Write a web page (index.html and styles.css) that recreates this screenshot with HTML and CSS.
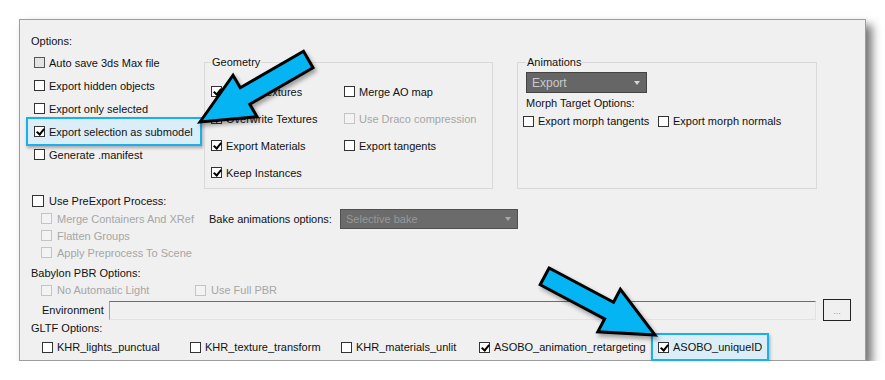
FILE: index.html
```html
<!DOCTYPE html>
<html lang="en">

<head>
    <meta charset="UTF-8">
    <title>Babylon Exporter Options</title>
    <link rel="stylesheet" href="styles.css">
</head>

<body>
    <div class="window">

        <!-- Top part: general options, geometry, animations -->
        <div class="top">
            <div class="options">
                <div class="label">Options:</div>
                <div class="opt-row"><span class="cb hover"></span>Auto save 3ds Max file</div>
                <div class="opt-row"><span class="cb"></span>Export hidden objects</div>
                <div class="opt-row"><span class="cb"></span>Export only selected</div>
                <div class="opt-row">
                    <span class="highlight"><span class="cb checked"></span>Export selection as submodel</span>
                </div>
                <div class="opt-row"><span class="cb"></span>Generate .manifest</div>
            </div>

            <fieldset class="group geometry">
                <legend>Geometry</legend>
                <div class="geo-grid">
                    <div class="item"><span class="cb checked"></span>Export Textures</div>
                    <div class="item"><span class="cb"></span>Merge AO map</div>
                    <div class="item"><span class="cb checked"></span>Overwrite Textures</div>
                    <div class="item disabled"><span class="cb"></span>Use Draco compression</div>
                    <div class="item"><span class="cb checked"></span>Export Materials</div>
                    <div class="item"><span class="cb"></span>Export tangents</div>
                    <div class="item"><span class="cb checked"></span>Keep Instances</div>
                </div>
            </fieldset>

            <fieldset class="group animations">
                <legend>Animations</legend>
                <div class="combo anim-combo"><span>Export</span><span class="caret"></span></div>
                <div class="label morph-label">Morph Target Options:</div>
                <div class="morph-row">
                    <div class="item"><span class="cb"></span>Export morph tangents</div>
                    <div class="item"><span class="cb"></span>Export morph normals</div>
                </div>
            </fieldset>
        </div>

        <!-- PreExport process -->
        <div class="pre">
            <div class="pre-col">
                <div class="pre-main"><span class="cb big"></span>Use PreExport Process:</div>
                <div class="sub-row disabled"><span class="cb"></span>Merge Containers And XRef</div>
                <div class="sub-row disabled"><span class="cb"></span>Flatten Groups</div>
                <div class="sub-row disabled"><span class="cb"></span>Apply Preprocess To Scene</div>
            </div>
            <div class="bake">
                <span class="bake-label">Bake animations options:</span>
                <div class="combo bake-combo"><span>Selective bake</span><span class="caret"></span></div>
            </div>
        </div>

        <!-- PBR -->
        <div class="label pbr-label">Babylon PBR Options:</div>
        <div class="pbr-row">
            <div class="item disabled"><span class="cb"></span>No Automatic Light</div>
            <div class="item disabled"><span class="cb"></span>Use Full PBR</div>
        </div>
        <div class="env-row">
            <span class="env-label">Environment</span>
            <div class="env-input"></div>
            <div class="browse-btn">...</div>
        </div>

        <!-- GLTF -->
        <div class="label">GLTF Options:</div>
        <div class="gltf-row">
            <div class="item"><span class="cb"></span>KHR_lights_punctual</div>
            <div class="item"><span class="cb"></span>KHR_texture_transform</div>
            <div class="item"><span class="cb"></span>KHR_materials_unlit</div>
            <div class="item"><span class="cb checked"></span>ASOBO_animation_retargeting</div>
            <div class="item"><span class="highlight"><span class="cb checked"></span>ASOBO_uniqueID</span></div>
        </div>
    </div>

    <!-- Callout arrows drawn over the dialog -->
    <svg class="arrows" width="885" height="380" viewBox="0 0 885 380">
        <defs>
            <polygon id="arrow" points="0,0 52,-24 52,-9.5 125,-9.5 125,9.5 52,9.5 52,24" />
        </defs>
        <use href="#arrow" transform="translate(200 122) rotate(-30)" />
        <use href="#arrow" transform="translate(655 335) rotate(208)" />
    </svg>
</body>

</html>
```

FILE: styles.css
```css
* {
    margin: 0;
    padding: 0;
    box-sizing: border-box;
}

body {
    font-family: "Liberation Sans", Arial, sans-serif;
    font-size: 11px;
    color: #111;
    background-color: #fff;
}

.window {
    width: 847px;
    height: 342px;
    margin: 19px 0 0 19px;
    padding: 14px 0 0 11px;
    background-color: #f0f0f0;
    border: 1px solid #9d9d9d;
    box-shadow: 6px 6px 9px rgba(0, 0, 0, 0.55);
}

.label {
    height: 14px;
    line-height: 14px;
}

/* checkboxes */
.cb {
    position: relative;
    flex: none;
    width: 11px;
    height: 11px;
    margin-right: 4px;
    border: 1px solid #333;
    background-color: #fff;
}

.cb.big {
    width: 12px;
    height: 12px;
    margin-right: 5px;
}

.cb.hover {
    background-color: #e3e3e3;
    border-color: #555;
}

.cb.checked::after {
    content: "";
    position: absolute;
    left: 3px;
    top: 0px;
    width: 3px;
    height: 6px;
    border-right: 2px solid #000;
    border-bottom: 2px solid #000;
    transform: rotate(40deg);
}

.disabled {
    color: #a6a6a6;
}

.disabled .cb {
    border-color: #c4c4c4;
    background-color: #f3f3f3;
}

.item,
.opt-row,
.sub-row,
.pre-main {
    display: flex;
    align-items: center;
    white-space: nowrap;
}

.highlight {
    display: flex;
    align-items: center;
    background-color: #dbeef8;
    border: 2px solid #18b0ee;
    box-shadow: 1px 2px 3px rgba(0, 0, 0, 0.3);
}

/* top part */
.top {
    display: flex;
    height: 155px;
}

.options {
    width: 173px;
}

.options .label {
    margin-bottom: 3px;
}

.opt-row {
    height: 23px;
    padding-left: 3px;
}

.opt-row .highlight {
    height: 29px;
    margin: -3px 0 -3px -8px;
    padding: 0 7px 0 6px;
}

.group {
    border: 1px solid #d9d9d9;
    margin-top: 21px;
}

.group legend {
    padding: 0 1px;
    line-height: 14px;
}

.geometry {
    width: 289px;
    height: 134px;
    padding: 9px 6px 0 6px;
}

.geo-grid {
    display: grid;
    grid-template-columns: 133px auto;
    grid-auto-rows: 27px;
}

.animations {
    width: 300px;
    height: 134px;
    margin-left: 24px;
    padding: 3px 8px 0 8px;
}

.combo {
    display: flex;
    align-items: center;
    justify-content: space-between;
    padding: 0 6px 0 5px;
    background-color: #666;
    border: 1px solid #444;
    color: #c9c9c9;
}

.caret {
    width: 0;
    height: 0;
    border-left: 3px solid transparent;
    border-right: 3px solid transparent;
    border-top: 4px solid #d6d6d6;
}

.anim-combo {
    width: 121px;
    height: 21px;
    font-size: 12px;
}

.morph-label {
    margin-top: 3px;
}

.morph-row {
    display: flex;
    height: 14px;
    margin: 4px 0 0 -3px;
}

.morph-row .item:first-child {
    width: 135px;
}

/* preexport part */
.pre {
    display: flex;
    margin-top: 3px;
}

.pre-col {
    width: 178px;
}

.pre-main {
    height: 18px;
    padding-left: 1px;
}

.sub-row {
    height: 17px;
    padding-left: 10px;
}

.sub-row .cb {
    margin-right: 5px;
}

.bake {
    display: flex;
    align-items: center;
    align-self: flex-start;
    margin-top: 17px;
}

.bake-label {
    width: 131px;
}

.bake-combo {
    width: 178px;
    height: 20px;
    background-color: #6b6b6b;
    border-color: #4f4f4f;
    color: #989898;
}

.bake-combo .caret {
    border-top-color: #a8a8a8;
}

/* pbr part */
.pbr-label {
    margin-top: 5px;
}

.pbr-row {
    display: flex;
    height: 14px;
    margin-top: 3px;
    padding-left: 10px;
}

.pbr-row .item:first-child {
    width: 154px;
}

.pbr-row .cb {
    margin-right: 5px;
}

.env-row {
    display: flex;
    align-items: center;
    height: 22px;
    margin-top: 2px;
    padding-left: 11px;
}

.env-label {
    width: 67px;
}

.env-input {
    width: 707px;
    height: 19px;
    background-color: #f0f0f0;
    border-top: 1px solid #6d6d6d;
    border-left: 1px solid #a4a4a4;
    border-right: 1px solid #e2e2e2;
    border-bottom: 1px solid #e2e2e2;
}

.browse-btn {
    width: 28px;
    height: 22px;
    margin-left: 7px;
    border: 1px solid #222;
    text-align: center;
    line-height: 22px;
    font-size: 9px;
    color: #999;
}

/* gltf part */
.gltf-row {
    display: grid;
    grid-template-columns: 148px 151px 138px 179px auto;
    height: 14px;
    margin-top: 5px;
    padding-left: 11px;
}

.gltf-row .highlight {
    height: 28px;
    margin: -7px 0 -7px -7px;
    padding: 0 5px;
}

/* callout arrows */
.arrows {
    position: absolute;
    left: 0;
    top: 0;
    pointer-events: none;
    filter: drop-shadow(2px 3px 2px rgba(0, 0, 0, 0.35));
}

.arrows use {
    fill: #05b4f3;
    stroke: #000;
    stroke-width: 3;
    stroke-linejoin: miter;
}
```
